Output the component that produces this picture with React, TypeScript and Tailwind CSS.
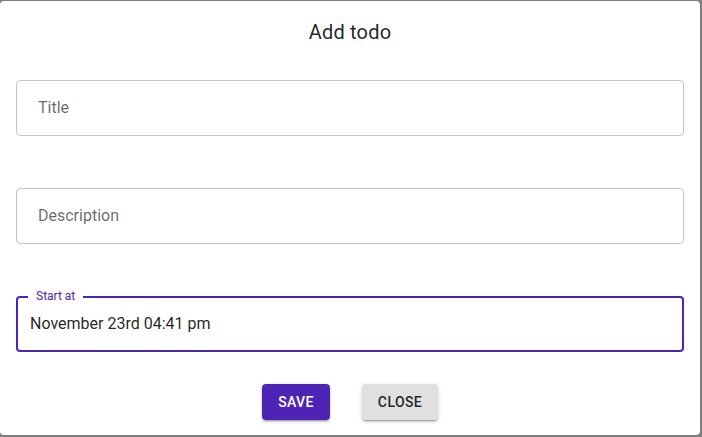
import React from "react";

export default function App() {
  const font = { fontFamily: "Roboto, 'Liberation Sans', sans-serif" };
  return (
    <div className="w-[702px] h-[437px] bg-[#7f7f7f] pt-px pr-[2px] pb-[2px] overflow-hidden" style={font}>
      <div className="w-[700px] h-[434px] bg-white rounded-[4px] flex flex-col">
        <h2 className="text-center text-[20px] leading-[32px] pt-[15px] text-[rgba(0,0,0,0.87)] font-normal tracking-[0.2px]">
          Add todo
        </h2>
        <div className="flex flex-col px-[16px] pt-[32px] gap-[52px]">
          <div className="h-[56px] border border-[#c4c4c4] rounded-[4px] flex items-center pl-[21px] text-[16px] text-[rgba(0,0,0,0.6)]">
            Title
          </div>
          <div className="h-[56px] border border-[#c4c4c4] rounded-[4px] flex items-center pl-[21px] text-[16px] text-[rgba(0,0,0,0.6)]">
            Description
          </div>
          <div className="relative h-[56px] border-2 border-[#4e24b6] rounded-[4px] flex items-center pl-[12px] text-[16px] text-[rgba(0,0,0,0.87)]">
            <span className="absolute left-[10px] top-[-9px] bg-white px-[8px] text-[12px] leading-[14px] text-[#4e24b6]">
              Start at
            </span>
            November 23rd 04:41 pm
          </div>
        </div>
        <div className="flex justify-center gap-[32px] pt-[32px]">
          <button className="h-[36px] w-[68px] rounded-[4px] bg-[#4e24b6] text-white text-[14px] font-medium tracking-[0.4px] uppercase shadow-[0_3px_1px_-2px_rgba(0,0,0,0.2),0_2px_2px_0_rgba(0,0,0,0.14),0_1px_5px_0_rgba(0,0,0,0.12)]">
            Save
          </button>
          <button className="h-[36px] w-[76px] rounded-[4px] bg-[#e0e0e0] text-[rgba(0,0,0,0.87)] text-[14px] font-medium tracking-[0.4px] uppercase shadow-[0_3px_1px_-2px_rgba(0,0,0,0.2),0_2px_2px_0_rgba(0,0,0,0.14),0_1px_5px_0_rgba(0,0,0,0.12)]">
            Close
          </button>
        </div>
      </div>
    </div>
  );
}
